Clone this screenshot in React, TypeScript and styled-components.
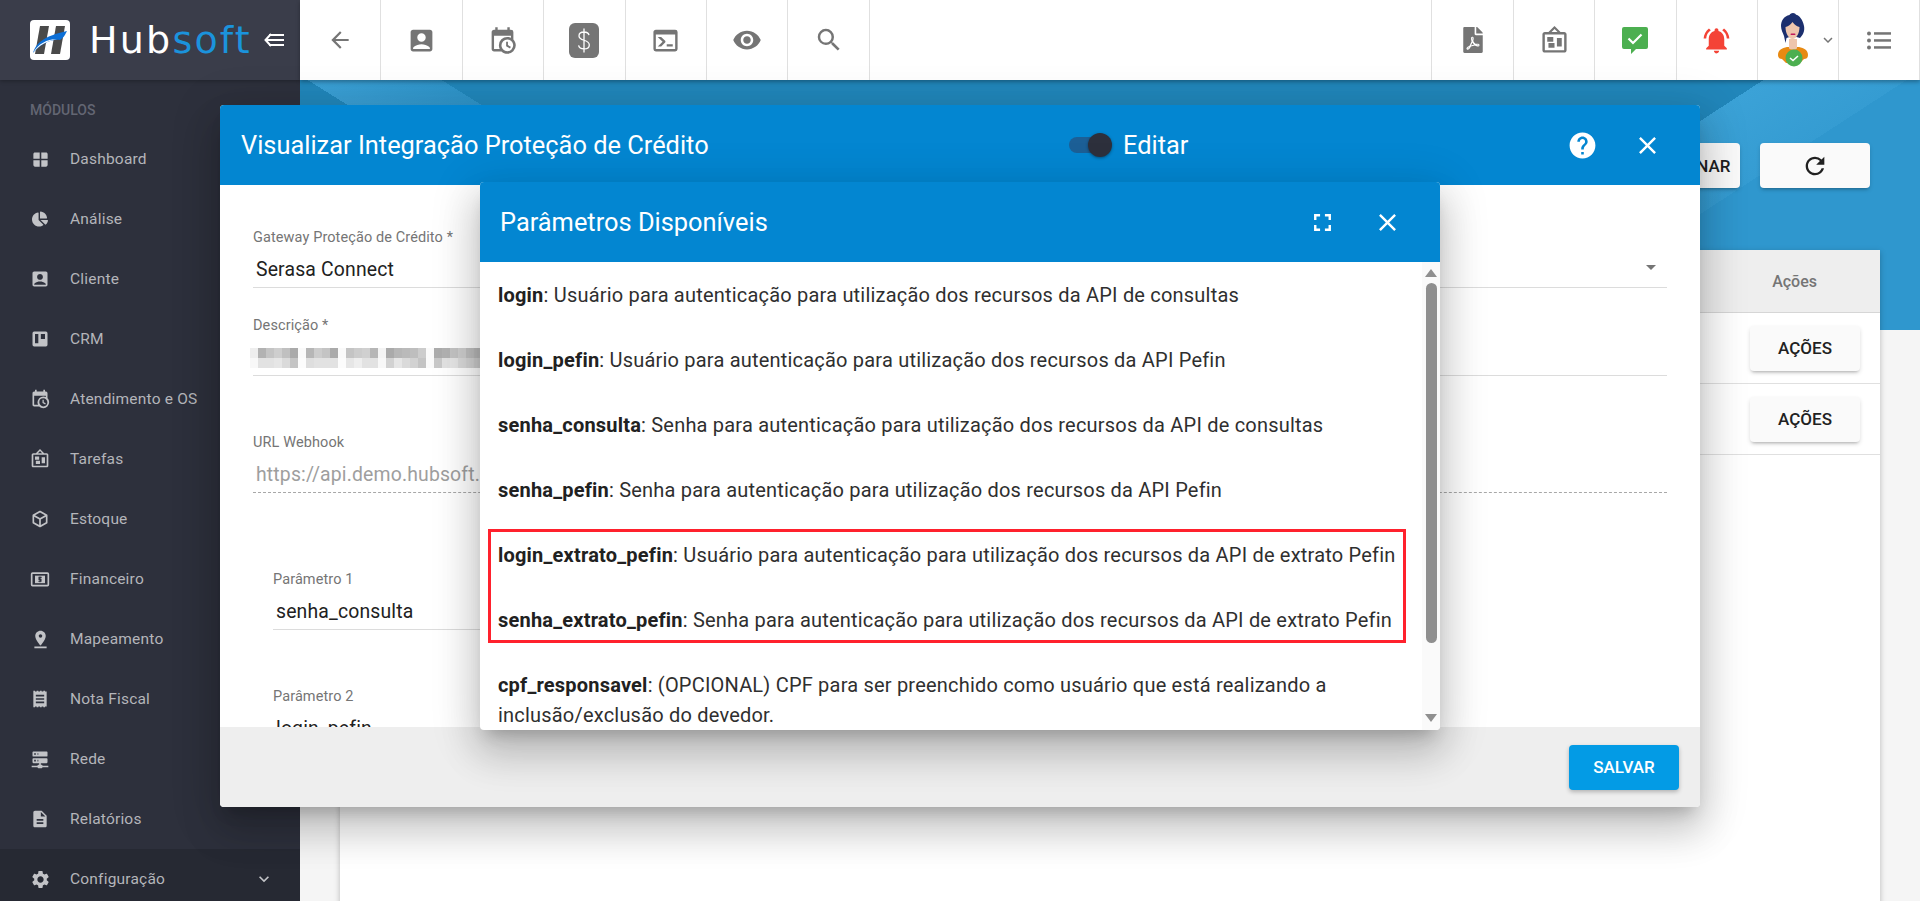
import React from "react";
import styled, { createGlobalStyle } from "styled-components";
import {
  MdAccountBox,
  MdArrowBack,
  MdClose,
  MdDescription,
  MdFullscreen,
  MdHelp,
  MdKeyboardArrowDown,
  MdNotificationsActive,
  MdPinDrop,
  MdRefresh,
  MdRemoveRedEye,
  MdSearch,
  MdSettings,
  MdWindow,
} from "react-icons/md";
import { FaChartPie, FaFilePdf } from "react-icons/fa";

const GlobalStyle = createGlobalStyle`
  html, body, #root { margin: 0; padding: 0; height: 100%; }
  body { font-family: Roboto, "Liberation Sans", sans-serif; overflow: hidden; background: #f5f5f5; }
  * { box-sizing: border-box; }
`;

const mdi = {
  calendarClock:
    "M15,13H16.5V15.82L18.94,17.23L18.19,18.53L15,16.69V13M19,8H5V19H9.67C9.24,18.09 9,17.07 9,16A7,7 0 0,1 16,9C17.07,9 18.09,9.24 19,9.67V8M5,21C3.89,21 3,20.1 3,19V5C3,3.89 3.89,3 5,3H6V1H8V3H16V1H18V3H19A2,2 0 0,1 21,5V11.1C22.24,12.36 23,14.09 23,16A7,7 0 0,1 16,23C14.09,23 12.36,22.24 11.1,21H5M16,11.15A4.85,4.85 0 0,0 11.15,16C11.15,18.68 13.32,20.85 16,20.85A4.85,4.85 0 0,0 20.85,16C20.85,13.32 18.68,11.15 16,11.15Z",
  console:
    "M20,19V7H4V19H20M20,3A2,2 0 0,1 22,5V19A2,2 0 0,1 20,21H4A2,2 0 0,1 2,19V5C2,3.89 2.9,3 4,3H20M13,17V15H18V17H13M9.58,13L5.57,9H8.4L11.7,12.3C12.09,12.69 12.09,13.33 11.7,13.72L8.42,17H5.59L9.58,13Z",
  cube:
    "M21,16.5C21,16.88 20.79,17.21 20.47,17.38L12.57,21.82C12.41,21.94 12.21,22 12,22C11.79,22 11.59,21.94 11.43,21.82L3.53,17.38C3.21,17.21 3,16.88 3,16.5V7.5C3,7.12 3.21,6.79 3.53,6.62L11.43,2.18C11.59,2.06 11.79,2 12,2C12.21,2 12.41,2.06 12.57,2.18L20.47,6.62C20.79,6.79 21,7.12 21,7.5V16.5M12,4.15L6.04,7.5L12,10.85L17.96,7.5L12,4.15M5,15.91L11,19.29V12.58L5,9.21V15.91M19,15.91V9.21L13,12.58V19.29L19,15.91Z",
  trello:
    "M19,3H5A2,2 0 0,0 3,5V19A2,2 0 0,0 5,21H19A2,2 0 0,0 21,19V5A2,2 0 0,0 19,3M10,17H6V6H10V17M18,12H13V6H18V12Z",
  board:
    "M12.04 2.5L9.53 5H14.53L12.04 2.5M4 7V20H20V7H4M12 0L17 5V5L20 5C21.11 5 22 5.89 22 7V20C22 21.11 21.11 22 20 22H4C2.89 22 2 21.11 2 20V7C2 5.89 2.89 5 4 5H7L12 0M7 18V14H12V18H7M14 17V10H18V17H14M6 9H11V13H6V9Z",
  network:
    "M13,19H14A1,1 0 0,1 15,20H22V22H15A1,1 0 0,1 14,23H10A1,1 0 0,1 9,22H2V20H9A1,1 0 0,1 10,19H11V17H4A1,1 0 0,1 3,16V12A1,1 0 0,1 4,11H20A1,1 0 0,1 21,12V16A1,1 0 0,1 20,17H13V19M4,3H20A1,1 0 0,1 21,4V8A1,1 0 0,1 20,9H4A1,1 0 0,1 3,8V4A1,1 0 0,1 4,3M9,7H10V5H9V7M9,15H10V13H9V15M5,5V7H7V5H5M5,13V15H7V13H5Z",
  receipt:
    "M4 2h2v1h2V2h2v1h2V2h2v1h2V2h2v1h2v18h-2v1h-2v-1h-2v1h-2v-1h-2v1H8v-1H6v1H4zM7 7v2h10V7zM7 11v2h10v-2zM7 15v2h10v-2z",
};

function MdiIcon({ d, size = 24 }: { d: string; size?: number }) {
  return (
    <svg width={size} height={size} viewBox="0 0 24 24" fill="currentColor" fillRule="evenodd">
      <path d={d} />
    </svg>
  );
}

function CashIcon({ size = 24 }: { size?: number }) {
  return (
    <svg width={size} height={size} viewBox="0 0 24 24">
      <rect x="2" y="5" width="20" height="15" rx="1" fill="none" stroke="currentColor" strokeWidth="2" />
      <rect x="6" y="8" width="12" height="9" fill="currentColor" />
      <path d="M14 10h-3.2v2.4h2.4v2.2H10M12 9v7" fill="none" stroke="#2d303c" strokeWidth="1.3" />
    </svg>
  );
}

function DollarBox() {
  return (
    <svg width="30" height="35" viewBox="0 0 30 35">
      <rect width="30" height="35" rx="6" fill="#757575" />
      <path
        d="M20 12.2c-.4-2-2.400-3.200-5-3.200-2.900 0-5 1.500-5 3.900 0 5.500 10.300 3.200 10.300 9 0 2.500-2.300 4-5.300 4-2.800 0-5-1.300-5.400-3.500M15 5.500v24"
        fill="none"
        stroke="#fff"
        strokeWidth="1.300"
      />
    </svg>
  );
}

function ChatCheck() {
  return (
    <svg width="26" height="27" viewBox="0 0 26 27">
      <path d="M2 0h22a2 2 0 0 1 2 2v18a2 2 0 0 1-2 2H14l-5 5v-5H2a2 2 0 0 1-2-2V2a2 2 0 0 1 2-2z" fill="#4caf50" />
      <path d="M6.500 11.500l4.500 4.500 8.500-8.500" fill="none" stroke="#fff" strokeWidth="2.200" />
    </svg>
  );
}

function ListIcon() {
  return (
    <svg width="24" height="19" viewBox="0 0 24 19" fill="#757575">
      <circle cx="2" cy="2.500" r="2" />
      <circle cx="2" cy="9.500" r="2" />
      <circle cx="2" cy="16.500" r="2" />
      <rect x="7" y="1.200" width="17" height="2.500" />
      <rect x="7" y="8.200" width="17" height="2.500" />
      <rect x="7" y="15.200" width="17" height="2.500" />
    </svg>
  );
}

function Avatar() {
  return (
    <svg width="32" height="54" viewBox="0 0 32 54">
      <path d="M1 42c0-5 4-7 9-8h12c5 1 9 3 9 8 0 3-2 4-4 4l-4 4H9l-4-4c-2 0-4-1-4-4z" fill="#e88a12" />
      <path d="M12 26h8v9c0 2-8 2-8 0z" fill="#eec5ad" />
      <path d="M16 0c-2 0-3 1-3.500 2C7 3 4 8 4 13c0 4 2 7 3 10 .5 2 1 5 1.500 7l1-5 3-1h7l3.500 1c3-3 5-7 4-12C26 7 22 2 19 1.800 18.500.8 17.500 0 16 0z" fill="#1c2f6e" />
      <path d="M8.500 14c2-.5 5-2 7-5 2 3 5 4.500 7 5 0 6-3 12-7 12s-7-6-7-12z" fill="#eec5ad" />
      <rect x="13.500" y="20.500" width="5" height="1.600" rx=".8" fill="#c2185b" />
      <circle cx="17" cy="45" r="8.500" fill="#4caf50" />
      <path d="M13 45l3 2.500 5-4.500" fill="none" stroke="#fff" strokeWidth="1.600" />
    </svg>
  );
}

function BrandMark() {
  return (
    <svg width="40" height="40" viewBox="0 0 40 40">
      <rect width="40" height="40" rx="4" fill="#fff" />
      <path d="M10 6h9l-5 28H5z" fill="#4a4a4a" />
      <path d="M26 6h9l-5 28h-9z" fill="#4a4a4a" />
      <path d="M3 33c3-10 11-17 34-22-3 6-4 7-7 9-8-1-18 3-27 13z" fill="#0d6fd6" />
      <path d="M3 33c5-9 14-14 24-14-10 2-18 6-24 14z" fill="#fff" />
    </svg>
  );
}

function CollapseIcon() {
  return (
    <svg width="20" height="14" viewBox="0 0 20 14" fill="none" stroke="#fff" strokeWidth="2">
      <path d="M7 1L1.500 7 7 13" />
      <path d="M5 2h15M2.500 7H20M5 12h15" />
    </svg>
  );
}

const Page = styled.div`
  position: relative;
  display: flex;
  width: 100%;
  height: 100vh;
  overflow: hidden;
`;

const Sidebar = styled.aside`
  display: flex;
  flex-direction: column;
  flex: 0 0 300px;
  height: 100%;
  background: #2d303c;
`;

const Brand = styled.div`
  display: flex;
  align-items: center;
  flex: 0 0 80px;
  padding-left: 30px;
  background: #3a3d4a;
  box-shadow: 0 1px 4px rgba(0, 0, 0, 0.3);
`;

const BrandName = styled.div`
  margin-left: 19px;
  width: 175px;
  font-family: "DejaVu Sans", sans-serif;
  font-size: 38px;
  letter-spacing: 2.2px;
  color: #fff;
  line-height: 40px;

  span {
    color: #1b93dc;
  }
`;

const ModulesLabel = styled.div`
  padding: 21px 0 0 30px;
  flex: 0 0 49px;
  font-size: 14px;
  font-weight: 500;
  line-height: 18px;
  color: #636673;
`;

const MenuList = styled.nav`
  display: flex;
  flex-direction: column;
  flex: 1;
`;

const MenuItem = styled.div<{ $active?: boolean }>`
  display: flex;
  align-items: center;
  height: 60px;
  padding: 0 26px 0 28px;
  flex: 0 0 60px;
  color: #b4b5ba;
  font-size: 15.500px;
  letter-spacing: 0.2px;
  background: ${(p) => (p.$active ? "#262933" : "transparent")};
`;

const MenuIcon = styled.span`
  display: flex;
  align-items: center;
  justify-content: center;
  width: 24px;
  margin-right: 18px;
  color: #c2c3c7;
`;

const MenuChevron = styled.span`
  display: flex;
  margin-left: auto;
  color: #c2c3c7;
`;

const Main = styled.main`
  display: flex;
  flex-direction: column;
  flex: 1;
  min-width: 0;
`;

const Topbar = styled.header`
  position: relative;
  z-index: 1;
  display: flex;
  flex: 0 0 80px;
  background: #fff;
  box-shadow: 0 2px 4px rgba(0, 0, 0, 0.3);
`;

const TopCell = styled.div<{ $width?: number }>`
  display: flex;
  align-items: center;
  justify-content: center;
  flex: 0 0 ${(p) => p.$width ?? 81.4}px;
  height: 80px;
  border-right: 1px solid #e0e0e0;
  color: #757575;
`;

const TopSpacer = styled.div`
  flex: 1;
  border-right: 1px solid #e0e0e0;
`;

const UserChevron = styled.span`
  display: flex;
  margin-left: 10px;
  margin-right: -18px;
  color: #757575;
`;

const Content = styled.section`
  flex: 1;
  padding: 63px 40px 0;
  background:
    linear-gradient(32deg, transparent 216px, #3a9fd4 216px, #2f94c9 287px, transparent 287px) 0 0 / 1620px 250px no-repeat,
    linear-gradient(147deg, #2186ba 797px, #3ba2d7 797px, #359cd2 875px, #2f97ce 875px) 0 0 / 1620px 250px no-repeat,
    #f5f5f5;
`;

const ActionRow = styled.div`
  display: flex;
  justify-content: flex-end;
  gap: 20px;
  margin-right: 10px;
  margin-bottom: 62px;
`;

const LightButton = styled.button<{ $width: number }>`
  display: flex;
  align-items: center;
  justify-content: center;
  width: ${(p) => p.$width}px;
  height: 45px;
  padding: 0;
  border: 0;
  border-radius: 4px;
  background: #fafafa;
  box-shadow: 0 3px 3px -2px rgba(0, 0, 0, 0.2), 0 2px 4px rgba(0, 0, 0, 0.14);
  color: #212121;
  font: 500 17px Roboto, sans-serif;
`;

const Card = styled.div`
  height: 700px;
  background: #fff;
  box-shadow: 0 2px 6px rgba(0, 0, 0, 0.25);
`;

const TableHead = styled.div`
  display: flex;
  align-items: center;
  justify-content: flex-end;
  height: 63px;
  padding-right: 63px;
  background: #eeeeee;
  border-bottom: 1px solid #d6d6d6;
  color: #757575;
  font-size: 16px;
  font-weight: 500;
`;

const TableRow = styled.div`
  display: flex;
  align-items: center;
  justify-content: flex-end;
  height: 71px;
  padding-right: 20px;
  border-bottom: 1px solid #e0e0e0;
`;

const Dialog = styled.div<{ $left: number; $top: number; $width: number; $height: number }>`
  position: absolute;
  z-index: 2;
  left: ${(p) => p.$left}px;
  top: ${(p) => p.$top}px;
  width: ${(p) => p.$width}px;
  height: ${(p) => p.$height}px;
  display: flex;
  flex-direction: column;
  overflow: hidden;
  border-radius: 4px;
  background: #fff;
  box-shadow: 0 11px 15px -7px rgba(0, 0, 0, 0.2), 0 24px 38px 3px rgba(0, 0, 0, 0.14), 0 9px 46px 8px rgba(0, 0, 0, 0.12);
`;

const DialogBar = styled.div<{ $inset: number }>`
  position: relative;
  display: flex;
  align-items: center;
  flex: 0 0 80px;
  padding-left: ${(p) => p.$inset}px;
  background: #0386d1;
  color: #fff;
  font-size: 25.400px;
`;

const BarTitle = styled.div`
  flex: 1;
  white-space: nowrap;
`;

const EditToggle = styled.div`
  position: absolute;
  left: 849px;
  top: 0;
  height: 80px;
  display: flex;
  align-items: center;
`;

const SwitchTrack = styled.span`
  position: relative;
  display: block;
  width: 36px;
  height: 16px;
  margin-right: 18px;
  border-radius: 8px;
  background: #1c5f96;
`;

const SwitchKnob = styled.span`
  position: absolute;
  left: 19px;
  top: -4px;
  width: 24px;
  height: 24px;
  border-radius: 50%;
  background: #2d303c;
  box-shadow: 0 1px 3px rgba(0, 0, 0, 0.4);
`;

const BarIcon = styled.span<{ $right: number }>`
  display: flex;
  margin-right: ${(p) => p.$right}px;
`;

const DialogBody = styled.div`
  flex: 1;
  min-height: 0;
  overflow: hidden;
  padding: 42px 33px 0;
`;

const Field = styled.div<{ $gap?: number; $indent?: boolean }>`
  margin-top: ${(p) => p.$gap ?? 0}px;
  ${(p) => (p.$indent ? "margin-left: 20px; width: 620px;" : "")}
`;

const FieldLabel = styled.div`
  height: 20px;
  padding-top: 1px;
  font-size: 14.500px;
  line-height: 20px;
  letter-spacing: 0.1px;
  color: #757575;
`;

const FieldValue = styled.div<{ $muted?: boolean; $dotted?: boolean }>`
  position: relative;
  display: flex;
  align-items: center;
  height: 41px;
  padding: 5px 0 0 3px;
  border-bottom: 1px ${(p) => (p.$dotted ? "dashed #a8a8a8" : "solid #dcdcdc")};
  font-size: 19.400px;
  letter-spacing: 0.16px;
  color: ${(p) => (p.$muted ? "#9e9e9e" : "#212121")};
`;

const SelectCaret = styled.span`
  position: absolute;
  right: 11px;
  top: 18px;
  width: 0;
  height: 0;
  border: 5px solid transparent;
  border-top: 5px solid #757575;
  border-bottom: 0;
`;

const Mosaic = styled.div`
  display: flex;
  flex-wrap: wrap;
  align-content: flex-start;
  width: 240px;
  height: 20px;
  margin-left: -6px;
`;

const MosaicCell = styled.span<{ $shade: number }>`
  width: 8px;
  height: 10px;
  background: rgb(${(p) => `${p.$shade},${p.$shade},${p.$shade}`});
`;

const DialogFooter = styled.div`
  display: flex;
  align-items: center;
  justify-content: flex-end;
  flex: 0 0 80px;
  padding-right: 21px;
  background: #eeeeee;
`;

const SaveButton = styled.button`
  width: 110px;
  height: 45px;
  border: 0;
  border-radius: 4px;
  background: #039be5;
  color: #fff;
  font: 500 17px Roboto, sans-serif;
  box-shadow: 0 2px 4px rgba(0, 0, 0, 0.25);
`;

const ParamPane = styled.div`
  display: flex;
  flex: 1;
  min-height: 0;
`;

const ParamList = styled.div`
  position: relative;
  flex: 1;
  overflow: hidden;
  padding: 18px 4px 0 18px;
  font-size: 20px;
  line-height: 30px;
  letter-spacing: 0.2px;
  color: #2f2f2f;

  p {
    margin: 0 0 35px;
  }

  b {
    font-weight: 700;
    color: #212121;
  }
`;

const Highlight = styled.div`
  position: absolute;
  left: 8px;
  top: 267px;
  width: 918px;
  height: 114px;
  border: 3px solid #ff212d;
  pointer-events: none;
`;

const ScrollTrack = styled.div`
  position: relative;
  display: flex;
  flex-direction: column;
  align-items: center;
  flex: 0 0 18px;
  background: #fafafa;
`;

const ScrollThumb = styled.div`
  width: 11px;
  height: 360px;
  margin-top: 6px;
  border-radius: 6px;
  background: #8f8f8f;
`;

const ScrollArrow = styled.span<{ $down?: boolean }>`
  width: 0;
  height: 0;
  border-left: 6px solid transparent;
  border-right: 6px solid transparent;
  ${(p) => (p.$down ? "border-top: 8px solid #8f8f8f; margin-top: 71px;" : "border-bottom: 8px solid #8f8f8f; margin-top: 7px;")}
`;

const menu = [
  { label: "Dashboard", icon: <MdWindow size={19} /> },
  { label: "Análise", icon: <FaChartPie size={16} /> },
  { label: "Cliente", icon: <MdAccountBox size={20} /> },
  { label: "CRM", icon: <MdiIcon d={mdi.trello} size={20} /> },
  { label: "Atendimento e OS", icon: <MdiIcon d={mdi.calendarClock} size={20} /> },
  { label: "Tarefas", icon: <MdiIcon d={mdi.board} size={20} /> },
  { label: "Estoque", icon: <MdiIcon d={mdi.cube} size={20} /> },
  { label: "Financeiro", icon: <CashIcon size={20} /> },
  { label: "Mapeamento", icon: <MdPinDrop size={21} /> },
  { label: "Nota Fiscal", icon: <MdiIcon d={mdi.receipt} size={20} /> },
  { label: "Rede", icon: <MdiIcon d={mdi.network} size={20} /> },
  { label: "Relatórios", icon: <MdDescription size={20} /> },
];

const params = [
  ["login", "Usuário para autenticação para utilização dos recursos da API de consultas"],
  ["login_pefin", "Usuário para autenticação para utilização dos recursos da API Pefin"],
  ["senha_consulta", "Senha para autenticação para utilização dos recursos da API de consultas"],
  ["senha_pefin", "Senha para autenticação para utilização dos recursos da API Pefin"],
  ["login_extrato_pefin", "Usuário para autenticação para utilização dos recursos da API de extrato Pefin"],
  ["senha_extrato_pefin", "Senha para autenticação para utilização dos recursos da API de extrato Pefin"],
  ["cpf_responsavel", "(OPCIONAL) CPF para ser preenchido como usuário que está realizando a inclusão/exclusão do devedor."],
];

const mosaicTop = [238, 178, 196, 206, 192, 170, 250, 182, 204, 196, 170, 250, 196, 204, 208, 182, 244, 170, 182, 186, 190, 204, 250, 172, 178, 196, 206, 192, 186, 190];
const mosaicBottom = [248, 226, 226, 230, 218, 196, 252, 222, 226, 226, 226, 252, 230, 238, 226, 226, 248, 210, 230, 218, 210, 196, 250, 200, 226, 230, 218, 212, 206, 200];

export default function App() {
  return (
    <Page>
      <GlobalStyle />
      <Sidebar>
        <Brand>
          <BrandMark />
          <BrandName>
            Hub<span>soft</span>
          </BrandName>
          <CollapseIcon />
        </Brand>
        <ModulesLabel>MÓDULOS</ModulesLabel>
        <MenuList>
          {menu.map((item) => (
            <MenuItem key={item.label}>
              <MenuIcon>{item.icon}</MenuIcon>
              {item.label}
            </MenuItem>
          ))}
          <MenuItem $active>
            <MenuIcon>
              <MdSettings size={21} />
            </MenuIcon>
            Configuração
            <MenuChevron>
              <MdKeyboardArrowDown size={20} />
            </MenuChevron>
          </MenuItem>
        </MenuList>
      </Sidebar>

      <Main>
        <Topbar>
          <TopCell>
            <MdArrowBack size={26} />
          </TopCell>
          <TopCell>
            <MdAccountBox size={29} />
          </TopCell>
          <TopCell>
            <MdiIcon d={mdi.calendarClock} size={29} />
          </TopCell>
          <TopCell>
            <DollarBox />
          </TopCell>
          <TopCell>
            <MdiIcon d={mdi.console} size={29} />
          </TopCell>
          <TopCell>
            <MdRemoveRedEye size={30} />
          </TopCell>
          <TopCell>
            <MdSearch size={30} />
          </TopCell>
          <TopSpacer />
          <TopCell>
            <FaFilePdf size={26} />
          </TopCell>
          <TopCell>
            <MdiIcon d={mdi.board} size={29} />
          </TopCell>
          <TopCell>
            <ChatCheck />
          </TopCell>
          <TopCell>
            <MdNotificationsActive size={31} color="#f44336" />
          </TopCell>
          <TopCell>
            <Avatar />
            <UserChevron>
              <MdKeyboardArrowDown size={18} />
            </UserChevron>
          </TopCell>
          <TopCell $width={80.6}>
            <ListIcon />
          </TopCell>
        </Topbar>

        <Content>
          <ActionRow>
            <LightButton $width={108}>ADICIONAR</LightButton>
            <LightButton $width={110}>
              <MdRefresh size={28} />
            </LightButton>
          </ActionRow>
          <Card>
            <TableHead>Ações</TableHead>
            <TableRow>
              <LightButton $width={110}>AÇÕES</LightButton>
            </TableRow>
            <TableRow>
              <LightButton $width={110}>AÇÕES</LightButton>
            </TableRow>
          </Card>
        </Content>
      </Main>

      <Dialog $left={220} $top={105} $width={1480} $height={702}>
        <DialogBar $inset={21}>
          <BarTitle>Visualizar Integração Proteção de Crédito</BarTitle>
          <EditToggle>
            <SwitchTrack>
              <SwitchKnob />
            </SwitchTrack>
            Editar
          </EditToggle>
          <BarIcon $right={35}>
            <MdHelp size={31} />
          </BarIcon>
          <BarIcon $right={38}>
            <MdClose size={29} />
          </BarIcon>
        </DialogBar>
        <DialogBody>
          <Field>
            <FieldLabel>Gateway Proteção de Crédito *</FieldLabel>
            <FieldValue>
              Serasa Connect
              <SelectCaret />
            </FieldValue>
          </Field>
          <Field $gap={27}>
            <FieldLabel>Descrição *</FieldLabel>
            <FieldValue>
              <Mosaic>
                {mosaicTop.map((shade, i) => (
                  <MosaicCell key={`t${i}`} $shade={shade} />
                ))}
                {mosaicBottom.map((shade, i) => (
                  <MosaicCell key={`b${i}`} $shade={shade} />
                ))}
              </Mosaic>
            </FieldValue>
          </Field>
          <Field $gap={56}>
            <FieldLabel>URL Webhook</FieldLabel>
            <FieldValue $muted $dotted>
              https://api.demo.hubsoft.com.br
            </FieldValue>
          </Field>
          <Field $gap={76} $indent>
            <FieldLabel>Parâmetro 1</FieldLabel>
            <FieldValue>senha_consulta</FieldValue>
          </Field>
          <Field $gap={56} $indent>
            <FieldLabel>Parâmetro 2</FieldLabel>
            <FieldValue>login_pefin</FieldValue>
          </Field>
        </DialogBody>
        <DialogFooter>
          <SaveButton>SALVAR</SaveButton>
        </DialogFooter>
      </Dialog>

      <Dialog $left={480} $top={182} $width={960} $height={548}>
        <DialogBar $inset={20}>
          <BarTitle>Parâmetros Disponíveis</BarTitle>
          <BarIcon $right={36}>
            <MdFullscreen size={29} />
          </BarIcon>
          <BarIcon $right={38}>
            <MdClose size={29} />
          </BarIcon>
        </DialogBar>
        <ParamPane>
          <ParamList>
            {params.map(([name, text]) => (
              <p key={name}>
                <b>{name}</b>: {text}
              </p>
            ))}
            <Highlight />
          </ParamList>
          <ScrollTrack>
            <ScrollArrow />
            <ScrollThumb />
            <ScrollArrow $down />
          </ScrollTrack>
        </ParamPane>
      </Dialog>
    </Page>
  );
}
